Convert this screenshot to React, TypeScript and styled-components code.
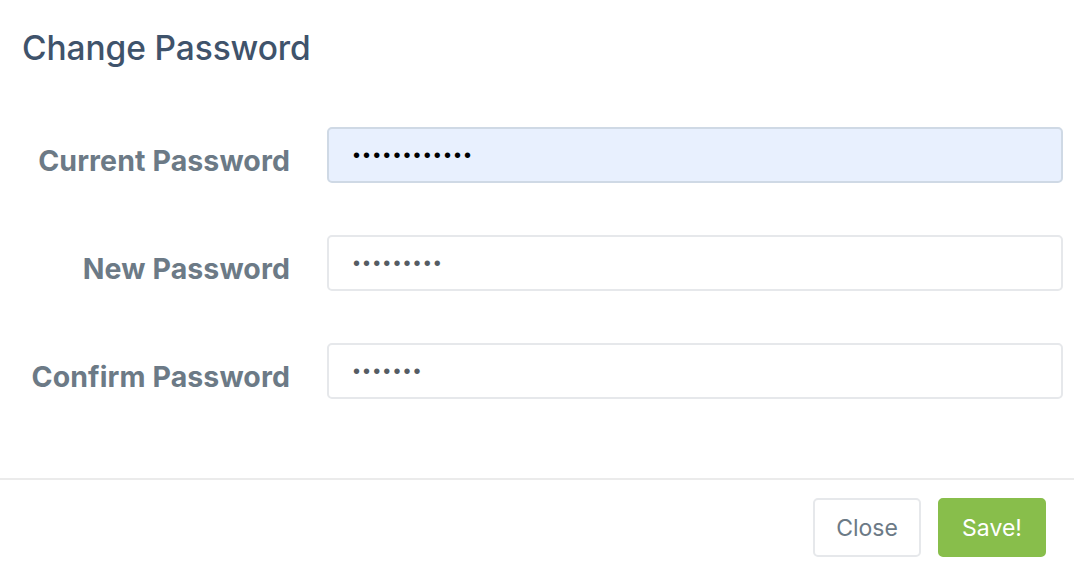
import { Fragment } from 'react';
import styled, { createGlobalStyle } from 'styled-components';

const GlobalStyle = createGlobalStyle`
  html, body {
    margin: 0;
    padding: 0;
    background: #ffffff;
  }
  body {
    font-family: Inter, "Liberation Sans", Arial, sans-serif;
  }
`;

const Modal = styled.div`
  width: 1074px;
  height: 570px;
  display: flex;
  flex-direction: column;
  background: #fff;
  box-sizing: border-box;
  overflow: hidden;
`;

const Header = styled.div`
  padding: 27px 22px 0 22px;
  height: 127px;
  box-sizing: border-box;
`;

const Title = styled.h2`
  margin: 0;
  font-size: 33.5px;
  line-height: 42px;
  font-weight: 500;
  color: #3f536b;
  letter-spacing: -0.1px;
`;

const Body = styled.form`
  display: grid;
  grid-template-columns: 290px 1fr;
  column-gap: 37px;
  row-gap: 52px;
  padding: 0 11px 79px 0;
  align-items: center;
`;

const Label = styled.label`
  text-align: right;
  font-size: 28.5px;
  font-weight: 700;
  color: #6c7a86;
  letter-spacing: 0.1px;
  padding-top: 11px;
  white-space: nowrap;
`;

const Field = styled.input<{ $filled?: boolean }>`
  box-sizing: border-box;
  height: 56px;
  width: 100%;
  padding: 0 24px;
  border: 2px solid ${(p) => (p.$filled ? '#cfd9e5' : '#e6e8eb')};
  background: ${(p) => (p.$filled ? '#e8f0fe' : '#ffffff')};
  border-radius: 5px;
  font-family: "Liberation Sans", Arial, sans-serif;
  font-size: 20px;
  letter-spacing: 3.1px;
  color: ${(p) => (p.$filled ? '#000000' : '#555c63')};
  outline: none;
`;

const Footer = styled.div`
  border-top: 2px solid #ebebeb;
  display: flex;
  justify-content: flex-end;
  gap: 17px;
  padding: 18px 28px 0 0;
`;

const Button = styled.button<{ $primary?: boolean }>`
  box-sizing: border-box;
  width: 108px;
  height: 59px;
  border-radius: 5px;
  font-family: Inter, "Liberation Sans", Arial, sans-serif;
  font-size: 23px;
  font-weight: 400;
  cursor: pointer;
  border: 2px solid ${(p) => (p.$primary ? '#88be4b' : '#e6e8eb')};
  background: ${(p) => (p.$primary ? '#88be4b' : '#ffffff')};
  color: ${(p) => (p.$primary ? '#ffffff' : '#6c7a86')};
`;

const fields = [
  { id: 'current', label: 'Current Password', value: '••••••••••••', filled: true },
  { id: 'new', label: 'New Password', value: '•••••••••', filled: false },
  { id: 'confirm', label: 'Confirm Password', value: '•••••••', filled: false },
];

export default function App() {
  return (
    <>
      <GlobalStyle />
      <Modal>
        <Header>
          <Title>Change Password</Title>
        </Header>
        <Body onSubmit={(e) => e.preventDefault()}>
          {fields.map((f) => (
            <Fragment key={f.id}>
              <Label htmlFor={f.id}>{f.label}</Label>
              <Field id={f.id} readOnly value={f.value} $filled={f.filled} />
            </Fragment>
          ))}
        </Body>
        <Footer>
          <Button type="button">Close</Button>
          <Button type="button" $primary>
            Save!
          </Button>
        </Footer>
      </Modal>
    </>
  );
}
